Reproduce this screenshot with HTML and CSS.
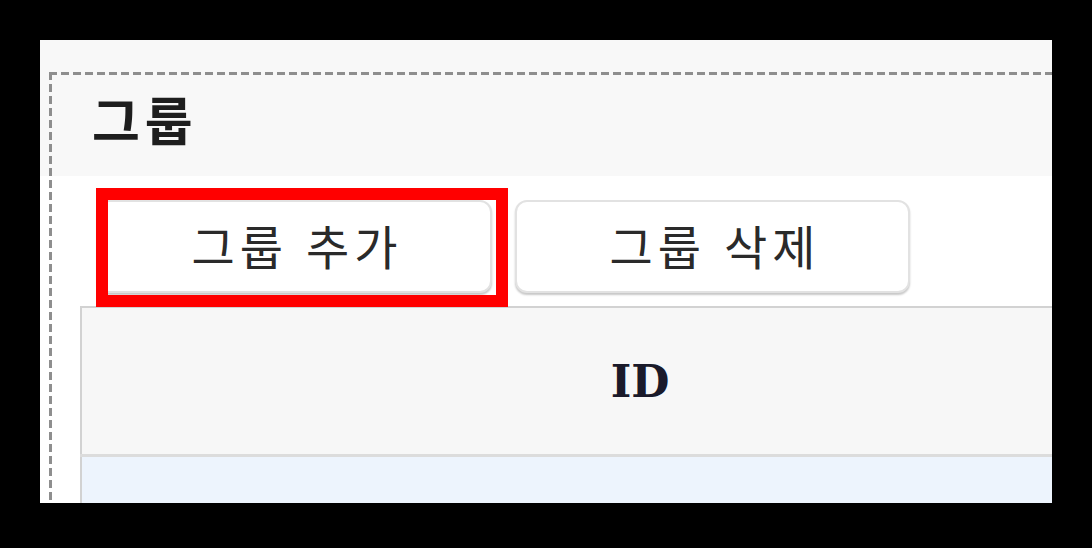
FILE: index.html
```html
<!DOCTYPE html>
<html lang="ko">
<head>
<meta charset="utf-8">
<link rel="stylesheet" href="styles.css">
</head>
<body>
<div class="frame">
  <div class="group">
    <div class="group-title">그룹</div>
    <div class="toolbar">
      <button class="btn">그룹 추가</button>
      <button class="btn">그룹 삭제</button>
    </div>
    <table class="grid">
      <thead>
        <tr><th>ID</th></tr>
      </thead>
      <tbody>
        <tr class="row-selected"><td></td></tr>
      </tbody>
    </table>
  </div>
  <div class="highlight"></div>
</div>
</body>
</html>
```
FILE: styles.css
```css
html, body {
  margin: 0;
  padding: 0;
  background: #000;
}
body {
  padding: 40px;
  font-family: "Noto Sans CJK KR", "Noto Sans", sans-serif;
}
.frame {
  position: relative;
  width: 1012px;
  height: 463px;
  overflow: hidden;
  background: linear-gradient(#f8f8f8 0, #f8f8f8 136px, #ffffff 136px);
}
.group {
  margin: 32px 0 0 9px;
  padding: 3px 0 0 3px;
  height: 600px;
  background:
    repeating-linear-gradient(90deg, #8e8e8e 0, #8e8e8e 8px, transparent 8px, transparent 12px) left top / 100% 3px no-repeat,
    repeating-linear-gradient(180deg, #8e8e8e 0, #8e8e8e 8px, transparent 8px, transparent 12px) left top / 3px 100% no-repeat;
}
.group-title {
  height: 101px;
  padding-left: 40px;
  font-size: 52px;
  font-weight: 700;
  letter-spacing: 5px;
  line-height: 88px;
  color: #1e1e1e;
}
.toolbar {
  display: flex;
  gap: 23px;
  padding: 24px 0 0 45px;
}
.btn {
  width: 395px;
  height: 93px;
  margin: 0;
  border: 2px solid #e2e2e2;
  border-radius: 12px;
  background: #fff;
  box-shadow: 0 2px 2px rgba(0, 0, 0, 0.22);
  font-family: "Noto Sans CJK KR", "Noto Sans", sans-serif;
  font-size: 47px;
  letter-spacing: 5px;
  color: #2a2a2a;
  padding: 0 0 4px 5px;
}
.grid {
  margin: 13px 0 0 28px;
  width: 1120px;
  border-collapse: collapse;
  border: 2px solid #d2d2d2;
}
.grid th {
  height: 146px;
  padding: 0;
  background: #f7f7f7;
  border-bottom: 3px solid #dcdcdc;
  font-family: "DejaVu Serif", serif;
  font-size: 44px;
  font-weight: 700;
  color: #1a1a2a;
  text-align: center;
}
.grid td {
  height: 60px;
  background: #edf4fd;
  padding: 0;
}
.highlight {
  position: absolute;
  left: 56px;
  top: 148px;
  width: 388px;
  height: 95px;
  border: 12px solid #ff0000;
}
```
